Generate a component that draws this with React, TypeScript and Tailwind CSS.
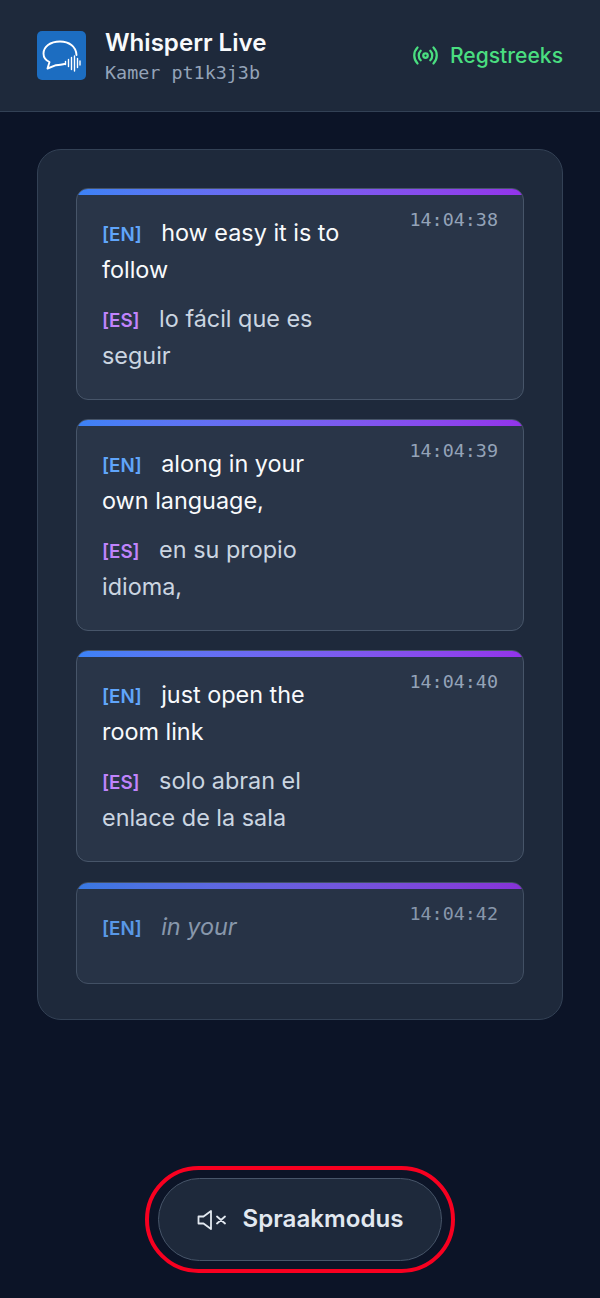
import { Radio } from "lucide-react";

type Entry = {
  time: string;
  en: string;
  es?: string;
  partial?: boolean;
};

const ENTRIES: Entry[] = [
  { time: "14:04:38", en: "how easy it is to follow", es: "lo fácil que es seguir" },
  { time: "14:04:39", en: "along in your own language,", es: "en su propio idioma," },
  { time: "14:04:40", en: "just open the room link", es: "solo abran el enlace de la sala" },
  { time: "14:04:42", en: "in your", partial: true },
];

const SANS = "font-['Inter','Liberation_Sans',sans-serif]";
const MONO = "font-['DejaVu_Sans_Mono','Liberation_Mono',monospace]";

function Logo() {
  return (
    <div className="h-[49px] w-[49px] shrink-0 rounded-[5px] bg-[#1c6dc1]">
      <svg viewBox="0 0 49 49" className="h-full w-full" fill="none" stroke="#fff" strokeLinecap="round" strokeLinejoin="round">
        <path
          d="M39.5 24C39 15.5 32 10.5 23 10.5C13 10.5 6.5 16 6.5 22.5C6.5 26.5 9 29.5 12.5 31L10.5 37.5L19 34.2C22 34 25 33.6 27.5 33"
          strokeWidth="1.9"
        />
        <path d="M28.5 30.5v3M31.5 28.5v7M34.5 26.5v12M37.5 25v15M40.5 27.5v9M43 30v4" strokeWidth="1.4" />
      </svg>
    </div>
  );
}

function SpeakerMuted() {
  return (
    <svg viewBox="0 0 29 20" className="h-[20px] w-[29px] shrink-0" fill="none" stroke="currentColor" strokeWidth="1.8" strokeLinecap="round" strokeLinejoin="round">
      <path d="M1.5 6.5H6.5L14 1V19L6.5 13.5H1.5Z" />
      <path d="M20 6.5L28 13.5M28 6.5L20 13.5" />
    </svg>
  );
}

function Card({ entry }: { entry: Entry }) {
  return (
    <div className={`overflow-hidden rounded-[12px] border border-[#475569] bg-[#293548] ${entry.partial ? "mt-[1px] opacity-90" : ""}`}>
      <div className="h-[6px] bg-gradient-to-r from-[#3b82f6] to-[#9333ea]" />
      <div className={`flex items-start justify-between pl-[25px] pr-[25px] pt-[19px] ${entry.partial ? "pb-[38px]" : "pb-[25px]"}`}>
        <div className="w-[245px]">
          <p className="text-[23.4px] leading-[37px] text-[#f8fafc]">
            <span className="mr-[19.5px] text-[18.8px] font-semibold leading-none text-[#60a5fa]">[EN]</span>
            {entry.partial ? <em className="text-[#94a3b8]">{entry.en}</em> : entry.en}
          </p>
          {entry.es && (
            <p className="mt-[12px] text-[23.4px] leading-[37px] text-[#cbd5e1]">
              <span className="mr-[19.5px] text-[18.8px] font-semibold leading-none text-[#c084fc]">[ES]</span>
              {entry.es}
            </p>
          )}
        </div>
        <span className={`${MONO} -mt-[7px] text-[18.4px] leading-[26px] text-[#94a3b8]`}>{entry.time}</span>
      </div>
    </div>
  );
}

export default function App() {
  return (
    <div className={`${SANS} flex h-[1298px] w-[600px] flex-col overflow-hidden bg-[#0c1427]`}>
      <header className="flex h-[112px] shrink-0 items-center justify-between border-b border-[#334155] bg-[#1e293b] pl-[37px] pr-[37px]">
        <div className="flex items-center gap-[19px]">
          <Logo />
          <div className="pt-[2px]">
            <h1 className="text-[24.1px] font-semibold leading-[32px] text-[#f8fafc]">Whisperr Live</h1>
            <p className={`${MONO} text-[18.4px] leading-[27px] text-[#94a3b8]`}>Kamer pt1k3j3b</p>
          </div>
        </div>
        <div className="flex items-center gap-[11px] text-[#4ade80]">
          <Radio size={27} strokeWidth={2} />
          <span className="text-[21.1px] font-medium">Regstreeks</span>
        </div>
      </header>

      <main className="flex flex-1 flex-col px-[37px] pt-[37px]">
        <section className="flex flex-col gap-[19px] rounded-[24px] border border-[#334155] bg-[#1e293b] px-[38px] pb-[35px] pt-[38px]">
          {ENTRIES.map((entry) => (
            <Card key={entry.time} entry={entry} />
          ))}
        </section>
      </main>

      <div className="flex justify-center pb-[25px]">
        <div className="rounded-full border-[4px] border-[#f80020] px-[9px] py-[8px]">
          <button
            type="button"
            className="flex h-[83px] w-[284px] items-center justify-center gap-[17px] rounded-full border border-[#475569] bg-[#1e293b] text-[#e2e8f0]"
          >
            <SpeakerMuted />
            <span className="text-[24.1px] font-semibold">Spraakmodus</span>
          </button>
        </div>
      </div>
    </div>
  );
}
